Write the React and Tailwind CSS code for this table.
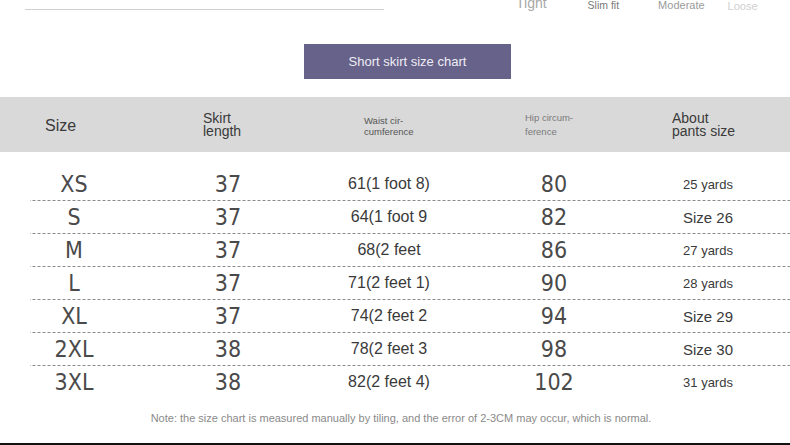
const rows = [
  { size: "XS", len: "37", waist: "61(1 foot 8)", hip: "80", pants: "25 yards", small: true },
  { size: "S", len: "37", waist: "64(1 foot 9", hip: "82", pants: "Size 26", small: false },
  { size: "M", len: "37", waist: "68(2 feet", hip: "86", pants: "27 yards", small: true },
  { size: "L", len: "37", waist: "71(2 feet 1)", hip: "90", pants: "28 yards", small: true },
  { size: "XL", len: "37", waist: "74(2 feet 2", hip: "94", pants: "Size 29", small: false },
  { size: "2XL", len: "38", waist: "78(2 feet 3", hip: "98", pants: "Size 30", small: false },
  { size: "3XL", len: "38", waist: "82(2 feet 4)", hip: "102", pants: "31 yards", small: true },
];

const App = () => {
  return (
    <div className="w-[790px] h-[445px] overflow-hidden bg-white font-['Liberation_Sans',Arial,sans-serif]">
      {/* fit scale strip, cut off at the top */}
      <div className="flex items-start h-[44px]">
        <div className="ml-[25px] mt-[9px] w-[359px] h-[1px] bg-[#cfcfcf]" />
        <span className="ml-[132px] -mt-[5px] text-[14px] leading-[16px] text-[#a8a8a8]">Tight</span>
        <span className="ml-[41px] -mt-[2px] text-[10.5px] leading-[14px] text-[#7a7a7a]">Slim fit</span>
        <span className="ml-[39px] -mt-[2px] text-[11px] leading-[14px] text-[#9a9a9a]">Moderate</span>
        <span className="ml-[23px] -mt-[1px] text-[11px] leading-[14px] text-[#d0d0d0]">Loose</span>
      </div>

      <div className="ml-[304px] w-[207px] h-[35px] bg-[#67628a] flex items-center justify-center text-[13px] text-[#eeedf4]">
        Short skirt size chart
      </div>

      {/* header band */}
      <div className="mt-[18px] h-[55px] bg-[#d9d9d9] grid grid-cols-[148px_160px_178px_136px_168px] items-center text-[#3a3a3a]">
        <div className="pl-[45px] pt-[2px] text-[16px] leading-[18px]">Size</div>
        <div className="pl-[55px] text-[14px] leading-[13px]">
          Skirt
          <br />
          length
        </div>
        <div className="pl-[56px] pt-[2px] text-[9.5px] leading-[11px] text-[#555]">
          Waist cir-
          <br />
          cumference
        </div>
        <div className="pl-[39px] text-[9.5px] leading-[14px] text-[#7a7a7a]">
          Hip circum-
          <br />
          ference
        </div>
        <div className="pl-[50px] text-[14px] leading-[13px]">
          About
          <br />
          pants size
        </div>
      </div>

      {/* size rows */}
      <div className="mt-[16px] ml-[30px]">
        {rows.map((r, i) => (
          <div
            key={r.size}
            className={
              i < rows.length - 1
                ? "h-[33px] pb-[1px] grid grid-cols-[88px_220px_102px_228px_80px] items-center text-[#3a3a3a] bg-[linear-gradient(to_right,#8c8c8c_3px,transparent_3px)] bg-[length:5px_1px] bg-repeat-x bg-bottom"
                : "h-[33px] pb-[1px] grid grid-cols-[88px_220px_102px_228px_80px] items-center text-[#3a3a3a]"
            }
          >
            <div className="text-center font-['DejaVu_Sans_Condensed','DejaVu_Sans',sans-serif] text-[23px] leading-none text-[#4a4a4a]">{r.size}</div>
            <div className="text-center font-['DejaVu_Sans_Condensed','DejaVu_Sans',sans-serif] text-[23px] leading-none text-[#4a4a4a]">{r.len}</div>
            <div className="text-center whitespace-nowrap text-[16px] leading-none">{r.waist}</div>
            <div className="text-center font-['DejaVu_Sans_Condensed','DejaVu_Sans',sans-serif] text-[23px] leading-none text-[#4a4a4a]">{r.hip}</div>
            <div
              className={
                r.small
                  ? "text-center whitespace-nowrap text-[13px] leading-none"
                  : "text-center whitespace-nowrap text-[15px] leading-none"
              }
            >
              {r.pants}
            </div>
          </div>
        ))}
      </div>

      <p className="mt-[12px] text-center pl-[12px] text-[11px] leading-[14px] text-[#8a8a8a]">
        Note: the size chart is measured manually by tiling, and the error of 2-3CM may occur, which is normal.
      </p>

      <div className="mt-[18px] h-[2px] bg-[#111]" />
    </div>
  );
};

export default App;
